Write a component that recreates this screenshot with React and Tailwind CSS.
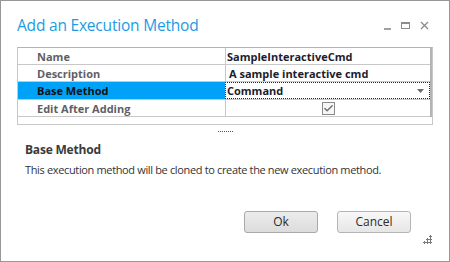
import { Check } from 'lucide-react'

const font = { fontFamily: '"Open Sans", "Noto Sans", sans-serif' }

function Row({ label, children }) {
  return (
    <div className="flex h-[17px] border-b border-[#c8c8c8]">
      <div className="w-[207px] shrink-0 pl-[19px] flex items-center text-[11px] font-bold leading-none text-[#5f5f66]">
        {label}
      </div>
      <div className="flex-1 border-l border-[#c8c8c8] flex items-center text-[11px] font-bold leading-none text-[#1c1c2c]">
        {children}
      </div>
    </div>
  )
}

function Grip() {
  const dots = [
    [7, 0],
    [4, 3],
    [7, 3],
    [1, 6],
    [4, 6],
    [7, 6],
  ]
  return (
    <svg width="11" height="11" viewBox="0 0 11 11" fill="#7a7a7a">
      {dots.map(([x, y], i) => (
        <g key={i}>
          <rect x={x} y={y + 1} width="3" height="1" />
          <rect x={x + 1} y={y} width="1" height="3" />
        </g>
      ))}
    </svg>
  )
}

export default function App() {
  return (
    <div
      className="relative w-[450px] h-[262px] bg-white border border-[#979797] flex flex-col text-[#333]"
      style={font}
    >
      {/* Title bar */}
      <div className="flex items-center h-[46px] pl-[16px] pr-[20px]">
        <div className="flex-1 text-[15.5px] tracking-[-0.2px] text-[#1d9be2] leading-none pt-[3px]">
          Add an Execution Method
        </div>
        <div className="flex items-center gap-[10px] pt-[2px]">
          <div className="w-[7px] h-[2px] bg-[#a0a0a0] mt-[7px]" />
          <div className="w-[9px] h-[7px] border border-[#8c8c8c] border-t-2" />
          <svg width="9" height="9" viewBox="0 0 9 9">
            <path d="M1 1L8 8M8 1L1 8" stroke="#8c8c8c" strokeWidth="1.3" />
          </svg>
        </div>
      </div>

      {/* Property grid */}
      <div className="ml-[16px] w-[416px] h-[78px] border border-[#c8c8c8] border-t-[#b4b4b4]">
        <div className="border-r-2 border-[#b4b4b4]">
          <Row label="Name">
            <span className="pl-[1px]">SampleInteractiveCmd</span>
          </Row>
          <Row label="Description">
            <span className="pl-[3px]">A sample interactive cmd</span>
          </Row>
          <div className="flex h-[18px] border-b border-[#c8c8c8]">
            <div className="w-[207px] shrink-0 pl-[19px] flex items-center text-[11px] font-bold leading-none bg-[#00a2f8] text-[#101010]">
              Base Method
            </div>
            <div className="flex-1 border border-dotted border-[#222] flex items-center justify-between text-[11px] font-bold leading-none text-[#1c1c2c] pr-[5px]">
              <span className="pl-[1px]">Command</span>
              <svg width="7" height="4" viewBox="0 0 7 4">
                <path d="M0 0H7L3.5 4Z" fill="#6a6a6a" />
              </svg>
            </div>
          </div>
          <Row label="Edit After Adding">
            <div className="w-full flex justify-center">
              <div className="w-[13px] h-[13px] border border-[#8a8a8a] bg-[#f6f6f6] flex items-center justify-center">
                <Check size={11} strokeWidth={3} className="text-[#6e6e6e]" />
              </div>
            </div>
          </Row>
        </div>
      </div>

      {/* Splitter grip */}
      <div className="flex justify-center h-[10px] items-start pt-[6px]">
        <div className="w-[15px] border-t border-dotted border-[#555]" />
      </div>

      {/* Help panel */}
      <div className="pl-[24px] pt-[9px]">
        <div className="text-[12px] font-bold tracking-[-0.2px] text-[#3a3a3a] leading-none">
          Base Method
        </div>
        <div className="text-[11px] tracking-[-0.35px] text-[#333] leading-none mt-[8px]">
          This execution method will be cloned to create the new execution method.
        </div>
      </div>

      {/* Buttons */}
      <div className="flex justify-end gap-[19px] pr-[38px] mt-auto mb-[28px]">
        <button className="w-[74px] h-[22px] rounded-[3px] border border-[#a9a9a9] bg-gradient-to-b from-[#ececec] to-[#dcdcdc] text-[12px] text-[#2a2a2a]">
          Ok
        </button>
        <button className="w-[74px] h-[22px] rounded-[3px] border border-[#b5b5b5] bg-gradient-to-b from-[#f8f8f8] to-[#e6e6e6] text-[12px] text-[#2a2a2a]">
          Cancel
        </button>
      </div>

      {/* Resize grip */}
      <div className="absolute right-[16px] bottom-[15px]">
        <Grip />
      </div>
    </div>
  )
}
